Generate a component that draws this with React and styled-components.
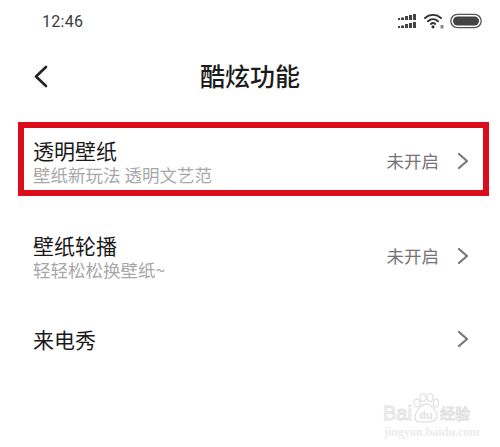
import styled, { createGlobalStyle } from "styled-components";

const cjk = `"Noto Sans CJK SC", "Noto Sans", sans-serif`;

const GlobalStyle = createGlobalStyle`
  html, body {
    margin: 0;
    padding: 0;
    background: #fff;
  }
`;

const Page = styled.div`
  position: relative;
  width: 500px;
  height: 447px;
  overflow: hidden;
  background: #fff;
  font-family: ${cjk};
`;

const StatusBar = styled.div`
  height: 42px;
  display: flex;
  align-items: center;
  justify-content: space-between;
  padding: 0 18px 0 42px;
`;

const Time = styled.span`
  font-family: Roboto, sans-serif;
  font-size: 16px;
  color: #3c3c3c;
  letter-spacing: 0.3px;
`;

const StatusIcons = styled.div`
  display: flex;
  align-items: center;
  gap: 6px;
`;

const Header = styled.div`
  box-sizing: border-box;
  height: 70px;
  padding-bottom: 4px;
  display: flex;
  align-items: center;
  justify-content: center;
  position: relative;
`;

const BackIcon = styled.svg`
  position: absolute;
  left: 33px;
  top: 22px;
`;

const Title = styled.h1`
  margin: 0;
  font-size: 25px;
  font-weight: 500;
  color: #1c1c1c;
  line-height: 66px;
`;

const List = styled.div`
  padding: 10px 11px 0 18px;
`;

const Row = styled.div`
  box-sizing: border-box;
  height: ${(p) => p.$height}px;
  margin-bottom: ${(p) => p.$gap}px;
  display: flex;
  align-items: center;
  justify-content: space-between;
  padding: 3px 14px 0 9px;
  border: ${(p) => (p.$active ? "6px solid #dc0c1c" : "6px solid transparent")};
`;

const RowText = styled.div`
  display: flex;
  flex-direction: column;
`;

const RowTitle = styled.div`
  font-size: 21px;
  line-height: 28px;
  color: #1a1a1a;
`;

const RowSub = styled.div`
  font-size: 17.5px;
  line-height: 22px;
  color: #a8a8a8;
  white-space: pre;
`;

const RowRight = styled.div`
  display: flex;
  align-items: center;
  gap: 18px;
`;

const RowValue = styled.span`
  font-size: 17.5px;
  color: #757575;
`;

const Watermark = styled.div`
  position: absolute;
  left: 383px;
  top: 392px;
  width: 100px;
  display: flex;
  flex-direction: column;
  align-items: flex-start;
  color: #ececec;
`;

const MarkTop = styled.div`
  display: flex;
  align-items: flex-end;
  height: 32px;
  font-family: "Liberation Sans", sans-serif;
  font-size: 20px;
  line-height: 22px;
  color: #fff;
  -webkit-text-stroke: 1px #e2e2e2;
`;

const MarkCn = styled.span`
  font-family: ${cjk};
  font-size: 15px;
  line-height: 22px;
  margin-left: 1px;
`;

const MarkUrl = styled.div`
  font-family: "Liberation Serif", serif;
  font-size: 12px;
  font-weight: 700;
  line-height: 12px;
  margin-left: 1px;
  margin-top: 2px;
`;

const Chevron = () => (
  <svg width="12" height="18" viewBox="0 0 12 18" fill="none">
    <path d="M2 2l8 7-8 7" stroke="#777" strokeWidth="2.2" strokeLinecap="round" strokeLinejoin="round" />
  </svg>
);

const Signal = () => (
  <svg width="20" height="16" viewBox="0 0 20 16" fill="#444">
    <rect x="0" y="5" width="2" height="2" />
    <rect x="3" y="4.5" width="3" height="2.5" />
    <rect x="7" y="3" width="3" height="4" />
    <rect x="11" y="2" width="3" height="5" />
    <rect x="15" y="1" width="3" height="6" />
    <rect x="0" y="13" width="2" height="2" />
    <rect x="3" y="12.5" width="3" height="2.5" />
    <rect x="7" y="11" width="3" height="4" />
    <rect x="11" y="10" width="3" height="5" />
    <rect x="15" y="9" width="3" height="6" />
  </svg>
);

const Wifi = () => (
  <svg width="20" height="16" viewBox="0 0 20 16" fill="none" stroke="#333" strokeWidth="1.9" strokeLinecap="round">
    <path d="M1 5C5.5 0.8 12.5 0.8 17 5" />
    <path d="M4 8.3C7 5.6 11 5.6 14 8.3" />
    <path d="M6.8 11C8 10 10 10 11.2 11" />
    <circle cx="9" cy="13.8" r="1.6" fill="#333" stroke="none" />
    <rect x="16.5" y="12" width="3" height="3.5" fill="#888" stroke="none" />
  </svg>
);

const Battery = () => (
  <svg width="32" height="16" viewBox="0 0 32 16" fill="none">
    <rect x="0.8" y="1.3" width="30.4" height="13.4" rx="6.7" stroke="#555" strokeWidth="1.3" />
    <rect x="3" y="3.4" width="26" height="9.2" rx="4.6" fill="#444" />
  </svg>
);

const Paw = () => (
  <svg width="27" height="31" viewBox="0 0 27 31" fill="#fff" stroke="#e2e2e2" strokeWidth="1.3">
    <ellipse cx="5" cy="10" rx="3" ry="4" />
    <ellipse cx="11" cy="4.5" rx="3" ry="3.8" />
    <ellipse cx="18" cy="4.5" rx="3" ry="3.8" />
    <ellipse cx="24" cy="10" rx="2.6" ry="4" />
    <path d="M14 11c5 0 12 8 11 13-1 5-7 5-11 5s-11 1-11-4 6-14 11-14z" />
    <text x="14" y="26" textAnchor="middle" fontSize="11" fontWeight="700" fontFamily="Liberation Sans, sans-serif" fill="#e2e2e2" stroke="none">
      du
    </text>
  </svg>
);

const rows = [
  { title: "透明壁纸", sub: "壁纸新玩法 透明文艺范", value: "未开启", active: true, height: 74, gap: 21 },
  { title: "壁纸轮播", sub: "轻轻松松换壁纸~", value: "未开启", height: 74, gap: 15 },
  { title: "来电秀", height: 62, gap: 0 },
];

export default function App() {
  return (
    <Page>
      <GlobalStyle />
      <StatusBar>
        <Time>12:46</Time>
        <StatusIcons>
          <Signal />
          <Wifi />
          <Battery />
        </StatusIcons>
      </StatusBar>
      <Header>
        <BackIcon width="16" height="24" viewBox="0 0 16 24" fill="none">
          <path d="M13 3L3 12.5 13 22" stroke="#222" strokeWidth="2.6" strokeLinecap="round" strokeLinejoin="round" />
        </BackIcon>
        <Title>酷炫功能</Title>
      </Header>
      <List>
        {rows.map((row) => (
          <Row key={row.title} $active={row.active} $height={row.height} $gap={row.gap}>
            <RowText>
              <RowTitle>{row.title}</RowTitle>
              {row.sub && <RowSub>{row.sub}</RowSub>}
            </RowText>
            <RowRight>
              {row.value && <RowValue>{row.value}</RowValue>}
              <Chevron />
            </RowRight>
          </Row>
        ))}
      </List>
      <Watermark>
        <MarkTop>
          Bai
          <Paw />
          <MarkCn>经验</MarkCn>
        </MarkTop>
        <MarkUrl>jingyan.baidu.com</MarkUrl>
      </Watermark>
    </Page>
  );
}
